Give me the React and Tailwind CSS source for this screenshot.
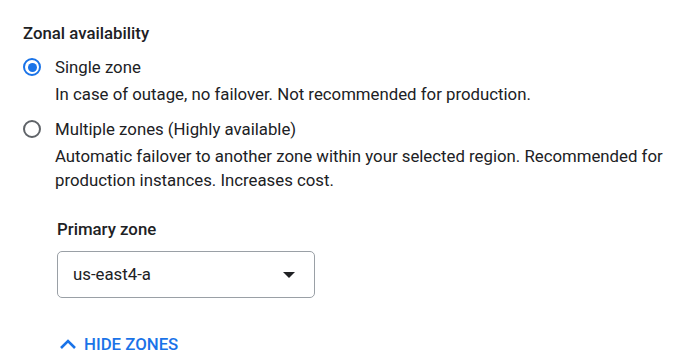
import React, { useState } from 'react';

const Radio = ({ checked }) => (
  <span
    className={`flex h-[18px] w-[18px] flex-shrink-0 items-center justify-center rounded-full border-2 ${
      checked ? 'border-[#1a73e8]' : 'border-[#5f6368]'
    }`}
  >
    {checked && <span className="h-[9px] w-[9px] rounded-full bg-[#1a73e8]" />}
  </span>
);

const Option = ({ checked, label, children, onClick }) => (
  <div className="flex flex-col">
    <button onClick={onClick} className="flex items-center gap-[14px] text-left leading-[24px]">
      <Radio checked={checked} />
      <span>{label}</span>
    </button>
    <p className="mt-[3px] pl-[32px] leading-[24px] text-[#202124]">{children}</p>
  </div>
);

export default function App() {
  const [zone, setZone] = useState('single');

  return (
    <div className="min-h-screen bg-white pl-[23px] pt-[21px] text-[16.8px] text-[#202124]" style={{ fontFamily: 'Roboto, "Liberation Sans", sans-serif' }}>
      <h2 className="font-medium leading-[24px]">Zonal availability</h2>

      <div className="mt-[10px] flex flex-col gap-[11px]">
        <Option checked={zone === 'single'} label="Single zone" onClick={() => setZone('single')}>
          In case of outage, no failover. Not recommended for production.
        </Option>
        <Option checked={zone === 'multi'} label="Multiple zones (Highly available)" onClick={() => setZone('multi')}>
          Automatic failover to another zone within your selected region. Recommended for
          <br />
          production instances. Increases cost.
        </Option>
      </div>

      <div className="ml-[34px] mt-[25px]">
        <div className="font-medium leading-[24px]">Primary zone</div>
        <button className="mt-[10px] flex h-[47px] w-[258px] items-center justify-between rounded-[5px] border border-[#9aa0a6] pl-[15px] pr-[19px]">
          <span>us-east4-a</span>
          <svg width="12" height="6" viewBox="0 0 12 6">
            <path d="M0 0 L12 0 L6 6 Z" fill="#202124" />
          </svg>
        </button>

        <button className="mt-[34px] flex items-center gap-[7px] pl-[2px] font-medium uppercase leading-[24px] text-[#1a73e8]">
          <svg width="18" height="12" viewBox="0 0 18 12">
            <path d="M2 10 L9 3 L16 10" fill="none" stroke="currentColor" strokeWidth="2.6" />
          </svg>
          Hide zones
        </button>
      </div>
    </div>
  );
}
